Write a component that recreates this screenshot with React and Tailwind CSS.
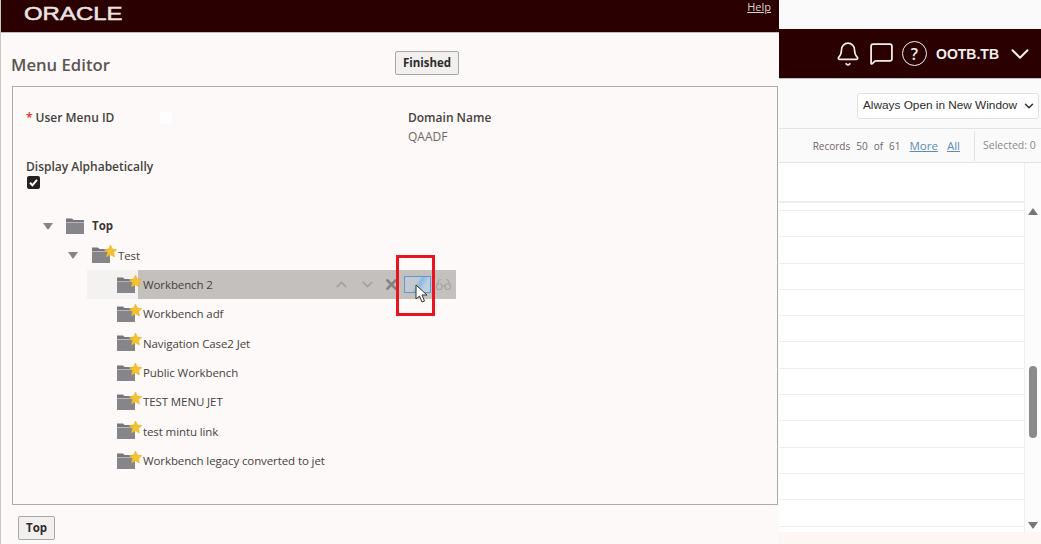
import React from "react";
import { Bell, MessageSquare, ChevronDown, ChevronUp, X, Glasses } from "lucide-react";

const font = "font-['Open_Sans','Noto_Sans',sans-serif]";

function Folder({ star }) {
  return (
    <svg width="27" height="22" viewBox="0 0 27 22" className="shrink-0">
      <path d="M1 5 V3.5 H7 L8.5 5 H19 V7.5 H1 Z" fill="#77777b" />
      <rect x="1" y="8" width="18" height="11" fill="#85858a" />
      {star && (
        <path
          d="M19.5 1 L21.4 5 L25.8 5.6 L22.6 8.6 L23.5 13 L19.5 10.8 L15.5 13 L16.4 8.6 L13.2 5.6 L17.6 5 Z"
          fill="#f1c232"
          stroke="#e6ad1e"
          strokeWidth="0.5"
        />
      )}
    </svg>
  );
}

function Tri() {
  return (
    <svg width="10" height="7" viewBox="0 0 10 7" className="shrink-0">
      <path d="M0 0 H10 L5 7 Z" fill="#85858a" />
    </svg>
  );
}

function Leaf({ label }) {
  return (
    <div className="flex h-[29.33px] items-center pl-[103px]">
      <Folder star />
      <span className="text-[11.5px] leading-none tracking-[-0.1px] text-[#46423f]">{label}</span>
    </div>
  );
}

const leaves = [
  "Workbench adf",
  "Navigation Case2 Jet",
  "Public Workbench",
  "TEST MENU JET",
  "test mintu link",
  "Workbench legacy converted to jet",
];

function Left() {
  return (
    <div className="relative flex h-full w-[779px] shrink-0 flex-col border-l border-[#c9c6c5] bg-[#fdf9f8]">
      <header className="flex h-[33px] shrink-0 items-start justify-between border-b border-[#c4bdbc] bg-[#2a0000]">
        <span className="ml-[23px] mt-[4px] origin-left scale-x-[1.33] font-['Liberation_Sans',sans-serif] text-[18px] leading-[20px] text-[#e9e4e2] [-webkit-text-stroke:0.5px_#e9e4e2]">
          ORACLE
        </span>
        <a className="mr-[8px] mt-[-1px] text-[11px] leading-[15px] text-[#d9d4d2] underline">Help</a>
      </header>

      <div className="flex h-[53px] shrink-0 items-start pl-[10px]">
        <h1 className="mt-[23px] w-[384px] text-[16.7px] font-semibold leading-[18px] text-[#5a5654]">Menu Editor</h1>
        <button className="mt-[18px] h-[24px] w-[64px] rounded-[2px] border border-[#a9a7a6] bg-[#f2f0ef] text-[11.5px] font-bold leading-none text-[#2e2b2a]">
          Finished
        </button>
      </div>

      <section className="ml-[11px] h-[419px] w-[766px] shrink-0 border border-[#adabaa]">
        <div className="flex pl-[13px] pt-[22px]">
          <div className="flex h-[18px] w-[382px] items-center text-[12px] font-semibold leading-none text-[#46423f]">
            <span className="mr-[3px] text-[#e8232a]">*</span>
            <span>User Menu ID</span>
            <span className="ml-[46px] h-[12px] w-[12px] rounded-[2px] bg-white" />
          </div>
          <div>
            <div className="flex h-[18px] items-center text-[12px] font-semibold leading-none text-[#46423f]">Domain Name</div>
            <div className="mt-[2px] text-[12px] leading-[16px] text-[#6b6765]">QAADF</div>
          </div>
        </div>

        <div className="pl-[13px] pt-[13px]">
          <div className="text-[12px] font-semibold leading-[18px] text-[#46423f]">Display Alphabetically</div>
          <div className="ml-[1px] flex h-[13px] w-[13px] items-center justify-center rounded-[2px] bg-[#242120]">
            <svg width="11" height="11" viewBox="0 0 11 11">
              <path d="M2 5.8 L4.4 8.3 L9 2.8" fill="none" stroke="#fff" strokeWidth="2" />
            </svg>
          </div>
        </div>

        <div className="pt-[22.5px]">
          <div className="flex h-[29.33px] items-center pl-[30px]">
            <Tri />
            <span className="ml-[12px]">
              <Folder />
            </span>
            <span className="text-[11.5px] font-bold leading-none text-[#3a3634]">Top</span>
          </div>
          <div className="flex h-[29.33px] items-center pl-[55px]">
            <Tri />
            <span className="ml-[13px]">
              <Folder star />
            </span>
            <span className="text-[11.5px] leading-none tracking-[-0.1px] text-[#46423f]">Test</span>
          </div>

          <div className="ml-[74px] flex h-[29.33px] w-[369px] items-center bg-[linear-gradient(90deg,#f4f2f1_51px,#c3c0be_51px)] pl-[29px]">
            <Folder star />
            <span className="w-[190px] text-[11.5px] leading-none tracking-[-0.1px] text-[#46423f]">Workbench 2</span>
            <ChevronUp size={17} strokeWidth={2.5} className="text-[#a5a3a1]" />
            <ChevronDown size={17} strokeWidth={2.5} className="ml-[9px] text-[#a5a3a1]" />
            <X size={17} strokeWidth={3.5} className="ml-[7px] text-[#858280]" />
            <span className="ml-[4px] h-[17px] w-[27px] border border-[#5b9bd5] bg-[linear-gradient(120deg,#c3c9cf_45%,#8ab8e0_55%,#bcd0e2_75%)]" />
            <Glasses size={17} strokeWidth={1.5} className="ml-[4px] text-[#a5a3a1]" />
          </div>

          {leaves.map((l) => (
            <Leaf key={l} label={l} />
          ))}
        </div>
      </section>

      <div className="pl-[17px] pt-[9px]">
        <button className="h-[24px] w-[37px] rounded-[2px] border border-[#a9a7a6] bg-[#f2f0ef] text-[11.5px] font-bold leading-none text-[#2e2b2a]">
          Top
        </button>
      </div>

      <div className="absolute left-[395px] top-[255px] h-[61px] w-[39px] border-[3px] border-[#e8141e]" />
      <svg width="15" height="20" viewBox="0 0 15 20" className="absolute left-[414px] top-[284px]">
        <path d="M1 1 V15 L4.5 12 L7 18 L9.5 17 L7 11 H12 Z" fill="#fff" stroke="#333" strokeWidth="1" />
      </svg>
    </div>
  );
}

function Right() {
  const rows = Array.from({ length: 12 });
  return (
    <div className="flex h-full flex-1 flex-col overflow-hidden bg-[#fbfafa]">
      <div className="h-[29px] shrink-0 bg-[#fbfafb]" />
      <div className="flex h-[50px] shrink-0 items-center justify-end border-b border-[#c4bdbc] bg-[#2a0000] pr-[11px] text-[#f3efee]">
        <Bell size={26} strokeWidth={1.5} />
        <MessageSquare size={25} strokeWidth={1.7} className="ml-[8px]" />
        <span className="ml-[8px] flex h-[25px] w-[25px] items-center justify-center rounded-full border-[1.5px] border-[#f3efee] text-[16px] font-semibold leading-none">
          ?
        </span>
        <span className="ml-[9px] font-['Liberation_Sans',sans-serif] text-[14px] font-bold leading-none">OOTB.TB</span>
        <ChevronDown size={30} strokeWidth={1.6} className="ml-[6px] mr-[-5px]" />
      </div>

      <div className="flex h-[50px] shrink-0 items-start justify-end border-b border-[#e4e3e4] pr-[2px] pt-[14px]">
        <div className="flex h-[26px] w-[182px] items-center justify-between whitespace-nowrap rounded-[3px] border border-[#e2e1e1] bg-white pl-[5px] pr-[2px] font-['Liberation_Sans',sans-serif] text-[11.8px] text-[#2b2b2b]">
          <span>Always Open in New Window</span>
          <ChevronDown size={14} strokeWidth={2.5} />
        </div>
      </div>

      <div className="flex h-[34px] shrink-0 items-center border-b border-[#e4e3e4]">
        <div className="flex w-[196px] items-center justify-end gap-[6px] border-r border-[#e4e3e4] pr-[14px] text-[10px] leading-[30px] text-[#6b6765]">
          <span>Records</span>
          <span>50</span>
          <span>of</span>
          <span className="mr-[3px]">61</span>
          <a className="mr-[3px] text-[11.5px] text-[#5b8db8] underline">More</a>
          <a className="text-[11.5px] text-[#5b8db8] underline">All</a>
        </div>
        <span className="pl-[8px] text-[10.5px] text-[#8a8785]">Selected: 0</span>
      </div>

      <div className="flex min-h-0 flex-1 bg-white">
        <div className="min-w-0 flex-1">
          <div className="h-[40px] border-b-2 border-[#eeedee]" />
          <div className="h-[7px]" />
          <div className="border-t border-[#f0eff0]" />
          {rows.map((_, i) => (
            <div key={i} className="h-[26.3px] border-b border-[#efeeef]" />
          ))}
        </div>
        <div className="flex w-[17px] shrink-0 flex-col items-center border-l border-[#f0eff0] bg-[#fcfcfd]">
          <svg width="10" height="7" viewBox="0 0 10 7" className="mt-[45px] shrink-0">
            <path d="M5 0 L10 7 H0 Z" fill="#77777b" />
          </svg>
          <div className="mt-[151px] h-[72px] w-[8px] shrink-0 rounded-[4px] bg-[#8b8b8e]" />
          <svg width="10" height="7" viewBox="0 0 10 7" className="mt-[84px] shrink-0">
            <path d="M0 0 H10 L5 7 Z" fill="#77777b" />
          </svg>
        </div>
      </div>
      <div className="h-[12px] shrink-0 bg-[#fdf6f4]" />
    </div>
  );
}

export default function App() {
  return (
    <div className={`flex h-[544px] w-[1041px] overflow-hidden ${font}`}>
      <Left />
      <Right />
    </div>
  );
}
